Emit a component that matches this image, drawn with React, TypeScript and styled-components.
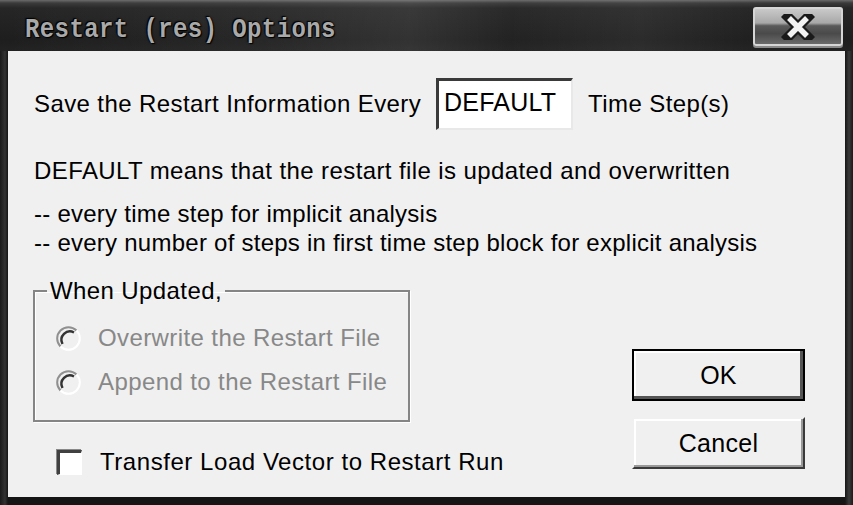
import styled, { createGlobalStyle } from "styled-components";

const GlobalStyle = createGlobalStyle`
  html, body {
    margin: 0;
    padding: 0;
    background: #1e1e1e;
  }
  body {
    font-family: "Liberation Sans", Arial, sans-serif;
  }
`;

const Window = styled.div`
  width: 853px;
  height: 505px;
  display: flex;
  flex-direction: column;
  background: #1c1c1c;
  overflow: hidden;
`;

const TitleBar = styled.div`
  height: 51px;
  flex: none;
  display: flex;
  align-items: center;
  justify-content: space-between;
  padding: 0 10px 0 25px;
  box-sizing: border-box;
  background:
    linear-gradient(90deg, rgba(255,255,255,0) 0%, rgba(255,255,255,0.04) 30%, rgba(255,255,255,0.09) 48%, rgba(255,255,255,0.02) 60%, rgba(255,255,255,0.06) 75%, rgba(255,255,255,0) 90%),
    linear-gradient(180deg, #6a6a6a 0px, #3a3a3a 3px, #262626 8px, #1e1e1e 40px, #222 51px);
`;

const Title = styled.span`
  font-family: "Liberation Mono", "DejaVu Sans Mono", monospace;
  font-weight: bold;
  font-size: 24px;
  letter-spacing: 0.4px;
  color: #a9a9a9;
  text-shadow: 0 0 2px #000, 1px 1px 1px #000, -1px -1px 1px #000;
  margin-top: 8px;
  white-space: pre;
  display: inline-block;
  transform: scaleY(1.15);
`;

const CloseButton = styled.div`
  width: 90px;
  height: 39px;
  margin-top: 2px;
  box-sizing: border-box;
  border: 2px solid #d6d6d6;
  border-radius: 3px;
  display: flex;
  align-items: center;
  justify-content: center;
  background: linear-gradient(180deg, #c9c9c9 0%, #a8a8a8 40%, #5a5a5a 48%, #4a4a4a 70%, #6a6a6a 100%);
  box-shadow: 0 2px 0 #8a8a8a;
`;

const Frame = styled.div`
  flex: 1;
  display: flex;
  padding: 0 8px 8px 8px;
  background: linear-gradient(90deg, #1a1a1a 0, #333 5px, #151515 8px, #151515 845px, #3a3a3a 849px, #1a1a1a 853px);
`;

const Body = styled.div`
  flex: 1;
  background: #f0f0f0;
  padding: 27px 40px 0 26px;
  box-sizing: border-box;
  color: #000;
  font-size: 24px;
  letter-spacing: 0.4px;
`;

const SaveRow = styled.div`
  display: flex;
  align-items: center;
  height: 52px;
  gap: 15px;
`;

const TextBox = styled.div`
  width: 137px;
  height: 52px;
  box-sizing: border-box;
  background: #fff;
  border-style: solid;
  border-width: 3px 2px 2px 3px;
  border-color: #3a3a3a #e8e8e8 #e8e8e8 #3a3a3a;
  padding: 6px 0 0 5px;
  font-size: 25px;
  letter-spacing: 0.2px;
  line-height: 30px;
`;

const Note = styled.div`
  margin-top: 26px;
  line-height: 30px;
`;

const BulletList = styled.div`
  margin-top: 13px;
  line-height: 29px;
  letter-spacing: 0.25px;
`;

const Lower = styled.div`
  display: flex;
  margin-top: 20px;
`;

const LeftColumn = styled.div`
  display: flex;
  flex-direction: column;
`;

const GroupBox = styled.fieldset`
  width: 377px;
  height: 145px;
  box-sizing: border-box;
  margin: 0 0 0 -1px;
  padding: 0 0 0 12px;
  border: 2px solid #858585;
  box-shadow: inset 1px 1px 0 #fff, 1px 1px 0 #fff;
`;

const Legend = styled.legend`
  padding: 0 3px;
  line-height: 28px;
`;

const OptionRow = styled.div<{ $first?: boolean }>`
  display: flex;
  align-items: center;
  gap: 17px;
  height: 44px;
  margin-top: ${(p) => (p.$first ? "11px" : "0")};
  padding-left: 9px;
  color: #888;
`;

const CheckRow = styled.div`
  display: flex;
  align-items: center;
  gap: 18px;
  height: 30px;
  margin-top: 25px;
  padding-left: 23px;
  letter-spacing: 0.55px;
`;

const CheckBox = styled.div`
  width: 25px;
  height: 25px;
  box-sizing: border-box;
  background: #fff;
  border-style: solid;
  border-width: 3px 1px 1px 3px;
  border-color: #404040 #fff #fff #404040;
  box-shadow: -1px -1px 0 #888;
`;

const ButtonColumn = styled.div`
  margin-left: auto;
  margin-top: 72px;
  display: flex;
  flex-direction: column;
  gap: 16px;
`;

const Button = styled.div<{ $default?: boolean }>`
  width: 173px;
  height: 52px;
  box-sizing: border-box;
  display: flex;
  align-items: center;
  justify-content: center;
  background: #f0f0f0;
  border: 2px solid ${(p) => (p.$default ? "#000" : "transparent")};
  border-right-color: ${(p) => (p.$default ? "#000" : "#3a3a3a")};
  border-bottom-color: ${(p) => (p.$default ? "#000" : "#3a3a3a")};
  box-shadow: ${(p) =>
    p.$default
      ? "inset -3px -3px 0 #555, inset 2px 2px 0 #fff"
      : "inset -2px -2px 0 #999, inset 2px 2px 0 #fff"};
  font-size: 25px;
  letter-spacing: 0.3px;
`;

const Radio = () => (
  <svg width="25" height="25" viewBox="0 0 25 25">
    <circle cx="12.5" cy="12.5" r="11" fill="#f0f0f0" />
    <path d="M 4.5 20.5 A 11 11 0 0 1 20.5 4.5" fill="none" stroke="#909090" strokeWidth="2" />
    <path d="M 6.5 18 A 8.5 8.5 0 0 1 18 6.5" fill="none" stroke="#333" strokeWidth="2.5" />
    <path d="M 20.5 4.5 A 11 11 0 0 1 4.5 20.5" fill="none" stroke="#fff" strokeWidth="2" />
  </svg>
);

const CloseIcon = () => (
  <svg width="34" height="26" viewBox="0 0 34 26">
    <path d="M 7 3 L 27 23 M 27 3 L 7 23" stroke="#1a1a1a" strokeWidth="10" strokeLinecap="square" />
    <path d="M 8 4 L 26 22 M 26 4 L 8 22" stroke="#f2f2f2" strokeWidth="5.5" strokeLinecap="butt" />
  </svg>
);

export default function App() {
  return (
    <>
      <GlobalStyle />
      <Window>
        <TitleBar>
          <Title>Restart (res) Options</Title>
          <CloseButton>
            <CloseIcon />
          </CloseButton>
        </TitleBar>
        <Frame>
          <Body>
            <SaveRow>
              <span>Save the Restart Information Every</span>
              <TextBox>DEFAULT</TextBox>
              <span>Time Step(s)</span>
            </SaveRow>
            <Note>DEFAULT means that the restart file is updated and overwritten</Note>
            <BulletList>
              <div>-- every time step for implicit analysis</div>
              <div>-- every number of steps in first time step block for explicit analysis</div>
            </BulletList>
            <Lower>
              <LeftColumn>
                <GroupBox>
                  <Legend>When Updated,</Legend>
                  <OptionRow $first>
                    <Radio />
                    <span>Overwrite the Restart File</span>
                  </OptionRow>
                  <OptionRow>
                    <Radio />
                    <span>Append to the Restart File</span>
                  </OptionRow>
                </GroupBox>
                <CheckRow>
                  <CheckBox />
                  <span>Transfer Load Vector to Restart Run</span>
                </CheckRow>
              </LeftColumn>
              <ButtonColumn>
                <Button $default>OK</Button>
                <Button>Cancel</Button>
              </ButtonColumn>
            </Lower>
          </Body>
        </Frame>
      </Window>
    </>
  );
}
